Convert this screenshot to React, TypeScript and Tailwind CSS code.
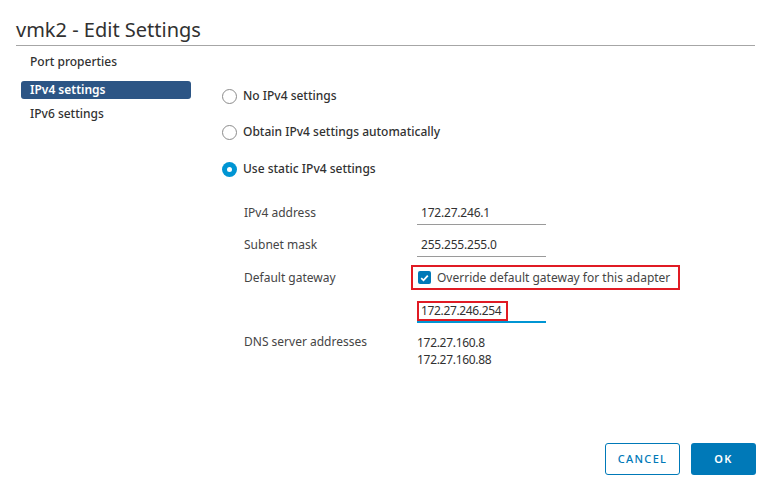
import React from "react";

const font = { fontFamily: '"Noto Sans", "Open Sans", Arial, sans-serif' };

function Radio({ checked, label }: { checked?: boolean; label: string }) {
  return (
    <div className="flex items-center h-[20px]">
      {checked ? (
        <span className="w-[15px] h-[15px] rounded-full bg-[#0095d3] flex items-center justify-center">
          <span className="w-[5px] h-[5px] rounded-full bg-white" />
        </span>
      ) : (
        <span className="w-[15px] h-[15px] rounded-full border border-[#8c8c8c] bg-white" />
      )}
      <span className="ml-[6px] text-[12px] font-medium text-[#313131]">{label}</span>
    </div>
  );
}

function Field({ value }: { value: string }) {
  return (
    <div className="w-[129px] h-[24px] border-b border-[#9a9a9a] pl-[4px] flex items-center text-[12px] tracking-[-0.2px] text-[#313131]">
      {value}
    </div>
  );
}

export default function App() {
  return (
    <div className="w-[768px] h-[488px] bg-white flex flex-col" style={font}>
      <div className="ml-[16px] mr-[13px] pt-[18px] pb-[3px] border-b border-[#a6a6a6]">
        <h1 className="text-[20px] leading-[24px] text-[#313131] font-normal">vmk2 - Edit Settings</h1>
      </div>

      <div className="flex flex-1">
        {/* left navigation */}
        <div className="ml-[21px] w-[170px] pt-[7px] flex flex-col">
          <div className="h-[18px] pl-[9px] flex items-center text-[12px] font-medium text-[#313131]">
            Port properties
          </div>
          <div className="mt-[10px] h-[18px] pl-[9px] flex items-center rounded-[3px] bg-[#2c5585] text-[12px] font-semibold text-white">
            IPv4 settings
          </div>
          <div className="mt-[6px] h-[18px] pl-[9px] flex items-center text-[12px] font-medium text-[#313131]">
            IPv6 settings
          </div>
        </div>

        {/* settings panel */}
        <div className="ml-[31px] flex-1 flex flex-col pt-[40px]">
          <Radio label="No IPv4 settings" />
          <div className="mt-[16px]">
            <Radio label="Obtain IPv4 settings automatically" />
          </div>
          <div className="mt-[17px]">
            <Radio checked label="Use static IPv4 settings" />
          </div>

          <div className="ml-[22px] mt-[22px] flex flex-col">
            <div className="flex items-end">
              <div className="w-[173px] h-[24px] flex items-center text-[12px] text-[#454545]">IPv4 address</div>
              <Field value="172.27.246.1" />
            </div>
            <div className="flex items-end mt-[8px]">
              <div className="w-[173px] h-[24px] flex items-center text-[12px] text-[#454545]">Subnet mask</div>
              <Field value="255.255.255.0" />
            </div>
            <div className="flex mt-[8px]">
              <div className="w-[167px] h-[25px] flex items-center text-[12px] text-[#454545]">Default gateway</div>
              <div className="flex flex-col">
                <div className="h-[25px] w-[269px] border-2 border-[#e01b24] flex items-center pl-[5px]">
                  <span className="w-[13px] h-[13px] rounded-[2px] bg-[#0079b8] flex items-center justify-center">
                    <svg width="9" height="8" viewBox="0 0 9 8">
                      <path d="M1.2 4.2 L3.5 6.3 L7.8 1.6" fill="none" stroke="white" strokeWidth="1.8" />
                    </svg>
                  </span>
                  <span className="ml-[6px] text-[12px] text-[#454545]">Override default gateway for this adapter</span>
                </div>
                <div className="mt-[11px] ml-[6px] w-[129px] border-b-2 border-[#0095d3]">
                  <div className="w-[91px] h-[20px] border-2 border-[#e01b24] flex items-center pl-[2px] text-[12px] tracking-[-0.35px] text-[#313131]">
                    172.27.246.254
                  </div>
                </div>
              </div>
            </div>
            <div className="flex mt-[10px]">
              <div className="w-[173px] h-[18px] flex items-center text-[12px] text-[#454545]">DNS server addresses</div>
              <div className="flex flex-col text-[12px] tracking-[-0.3px] text-[#313131] leading-[17px]">
                <span className="h-[18px] flex items-center">172.27.160.8</span>
                <span>172.27.160.88</span>
              </div>
            </div>
          </div>
        </div>
      </div>

      <div className="flex justify-end gap-[11px] mr-[12px] mb-[13px]">
        <button className="w-[75px] h-[32px] rounded-[3px] border border-[#0079b8] bg-white text-[#0079b8] text-[11px] font-medium tracking-[0.12em]">
          CANCEL
        </button>
        <button className="w-[65px] h-[32px] rounded-[3px] bg-[#0079b8] text-white text-[11px] font-semibold tracking-[0.12em]">
          OK
        </button>
      </div>
    </div>
  );
}
